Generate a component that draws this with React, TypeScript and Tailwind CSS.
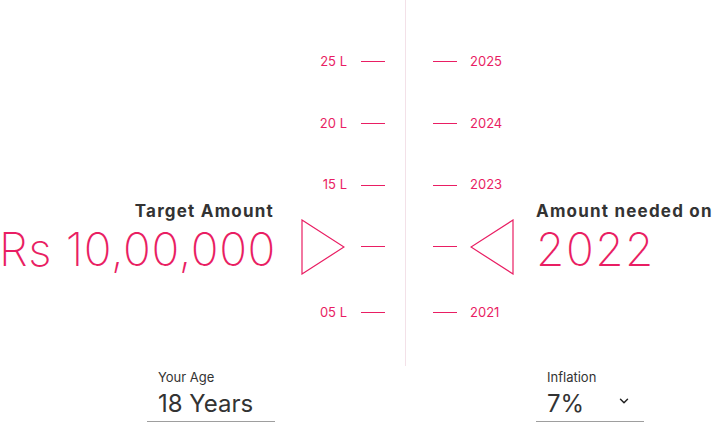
import { ChevronDown } from 'lucide-react';

const leftMarks = ['25 L', '20 L', '15 L', null, '05 L'];
const rightMarks = ['2025', '2024', '2023', null, '2021'];

function Triangle({ dir }: { dir: 'right' | 'left' }) {
  const pts = dir === 'right' ? '1,1 1,55 43,28' : '43,1 43,55 1,28';
  return (
    <svg width="44" height="56" viewBox="0 0 44 56" className="block">
      <polygon points={pts} fill="none" stroke="#e91e63" strokeWidth="1.2" strokeLinejoin="miter" />
    </svg>
  );
}

function Tick() {
  return <div className="h-px w-6 bg-[#e91e63]" />;
}

export default function App() {
  return (
    <div
      className="relative h-[422px] w-[713px] overflow-hidden bg-white text-[#333]"
      style={{ fontFamily: 'Inter, "Open Sans", sans-serif' }}
    >
      <div className="grid grid-cols-[275px_261px_1fr] grid-rows-[366px_56px]">
        {/* Target amount */}
        <div className="flex flex-col items-end pt-[201px]">
          <div className="mr-px whitespace-nowrap text-[17px] font-bold leading-5 tracking-[1.2px]">Target Amount</div>
          <div className="mt-[4px] mr-[-1px] whitespace-nowrap text-[46px] font-extralight leading-[48px] tracking-[0.6px] text-[#e91e63]">
            Rs 10,00,000
          </div>
        </div>

        {/* Scale */}
        <div className="flex">
          <div className="flex w-[130px] flex-col pt-[31px]">
            {leftMarks.map((m, i) => (
              <div
                key={i}
                className={`flex items-center justify-end pr-5 ${i === 4 ? 'h-[70px]' : 'h-[61.7px]'}`}
              >
                {m ? (
                  <span className="mr-[14px] text-[13px] text-[#e91e63]">{m}</span>
                ) : (
                  <div className="mr-4">
                    <Triangle dir="right" />
                  </div>
                )}
                <Tick />
              </div>
            ))}
          </div>
          <div className="w-px bg-[#f3e1e8]" />
          <div className="flex w-[130px] flex-col pt-[31px]">
            {rightMarks.map((m, i) => (
              <div key={i} className={`flex items-center pl-[27px] ${i === 4 ? 'h-[70px]' : 'h-[61.7px]'}`}>
                <Tick />
                {m ? (
                  <span className="ml-[13px] text-[13px] text-[#e91e63]">{m}</span>
                ) : (
                  <div className="ml-[13px]">
                    <Triangle dir="left" />
                  </div>
                )}
              </div>
            ))}
          </div>
        </div>

        {/* Amount needed on */}
        <div className="flex flex-col items-start pt-[201px]">
          <div className="whitespace-nowrap text-[17px] font-bold leading-5 tracking-[1.2px]">Amount needed on</div>
          <div className="mt-[4px] text-[46px] font-extralight leading-[48px] tracking-[1.5px] text-[#e91e63]">2022</div>
        </div>

        {/* Your age */}
        <div className="flex justify-end">
          <div className="w-[128px] border-b border-[#9e9e9e] pl-[11px] pt-[3px]">
            <div className="text-[13px] leading-4">Your Age</div>
            <div className="mt-[3px] text-[24px] leading-8">18 Years</div>
          </div>
        </div>
        <div />
        {/* Inflation */}
        <div className="flex">
          <div className="w-[108px] border-b border-[#9e9e9e] pl-[11px] pt-[3px]">
            <div className="text-[13px] leading-4">Inflation</div>
            <div className="mt-[3px] flex items-start justify-between pr-[13px]">
              <span className="text-[24px] leading-8">7%</span>
              <ChevronDown size={14} strokeWidth={2.5} className="mt-[6px] text-[#222]" />
            </div>
          </div>
        </div>
      </div>
    </div>
  );
}
